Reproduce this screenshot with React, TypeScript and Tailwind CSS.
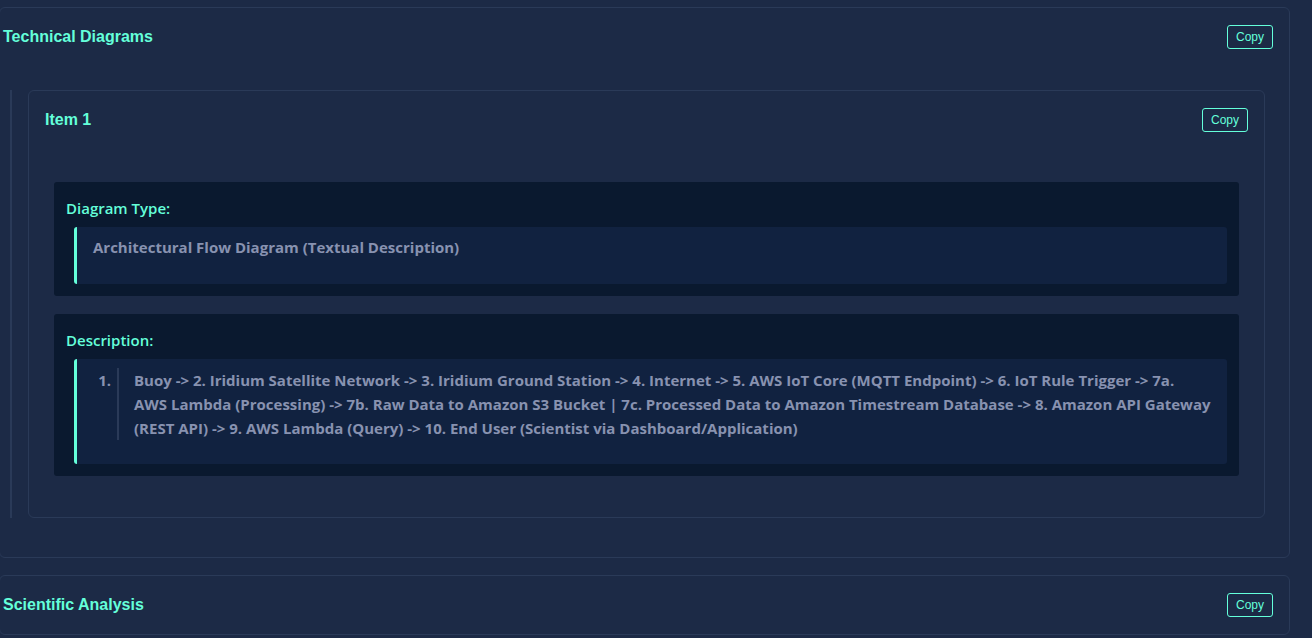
import React from 'react';

const heading = { fontFamily: '"Liberation Sans", Arial, sans-serif' };
const body = { fontFamily: '"Open Sans", "Noto Sans", sans-serif' };

function CopyButton() {
    return (
        <button
            className="h-6 w-[46px] rounded-[3px] border border-[#64ffda] text-[12px] text-[#64ffda] leading-none flex items-center justify-center"
            style={heading}
        >
            Copy
        </button>
    );
}

function Block({ label, children }: { label: string; children: React.ReactNode }) {
    return (
        <div className="bg-[#0a192f] rounded-[3px] px-3 pt-[17px] pb-3">
            <div className="text-[15px] font-semibold text-[#64ffda] leading-[18px] mb-[10px]" style={body}>
                {label}
            </div>
            <div className="ml-2 bg-[#112240] border-l-[3px] border-[#64ffda] rounded-[3px]">
                {children}
            </div>
        </div>
    );
}

function Section({ title, children }: { title: string; children?: React.ReactNode }) {
    return (
        <div className="-ml-px w-[1291px] border border-[#2a3a58] rounded-[6px] bg-[#1c2a46]">
            <div className="flex items-center justify-between pl-[3px] pr-[16px] py-[17px]">
                <h2 className="text-[16px] font-bold text-[#64ffda]" style={heading}>{title}</h2>
                <CopyButton />
            </div>
            {children}
        </div>
    );
}

export default function App() {
    const steps = 'Buoy -> 2. Iridium Satellite Network -> 3. Iridium Ground Station -> 4. Internet -> 5. AWS IoT Core (MQTT Endpoint) -> 6. IoT Rule Trigger -> 7a. AWS Lambda (Processing) -> 7b. Raw Data to Amazon S3 Bucket | 7c. Processed Data to Amazon Timestream Database -> 8. Amazon API Gateway (REST API) -> 9. AWS Lambda (Query) -> 10. End User (Scientist via Dashboard/Application)';

    return (
        <div className="min-h-screen w-full overflow-hidden bg-[#1c2a46] pt-[7px] flex flex-col gap-[17px]">
            <Section title="Technical Diagrams">
                <div className="pt-[24px] pb-[39px] pr-[24px] pl-[10px]">
                    <div className="border-l-2 border-[#2a3a58] pl-[16px]">
                        {/* Item card */}
                        <div className="border border-[#2a3a58] rounded-[6px] pb-[41px]">
                            <div className="flex items-center justify-between px-4 pt-[17px]">
                                <h3 className="text-[16px] font-bold text-[#64ffda]" style={heading}>Item 1</h3>
                                <CopyButton />
                            </div>
                            <div className="px-[25px] pt-[50px] flex flex-col gap-[18px]">
                                <Block label="Diagram Type:">
                                    <p className="pl-4 pt-[8px] pb-[25px] text-[15px] font-bold text-[#8892b0] leading-6" style={body}>
                                        Architectural Flow Diagram (Textual Description)
                                    </p>
                                </Block>
                                <Block label="Description:">
                                    <div className="flex pt-[9px] pb-[24px] pr-4">
                                        <div className="w-[40px] shrink-0 text-right pr-[6px] text-[15px] font-bold text-[#8892b0] leading-6" style={body}>
                                            1.
                                        </div>
                                        <div className="border-l-2 border-[#2a3a58] pl-[15px] text-[15px] font-bold text-[#8892b0] leading-6" style={body}>
                                            {steps}
                                        </div>
                                    </div>
                                </Block>
                            </div>
                        </div>
                    </div>
                </div>
            </Section>
            <Section title="Scientific Analysis" />
        </div>
    );
}
